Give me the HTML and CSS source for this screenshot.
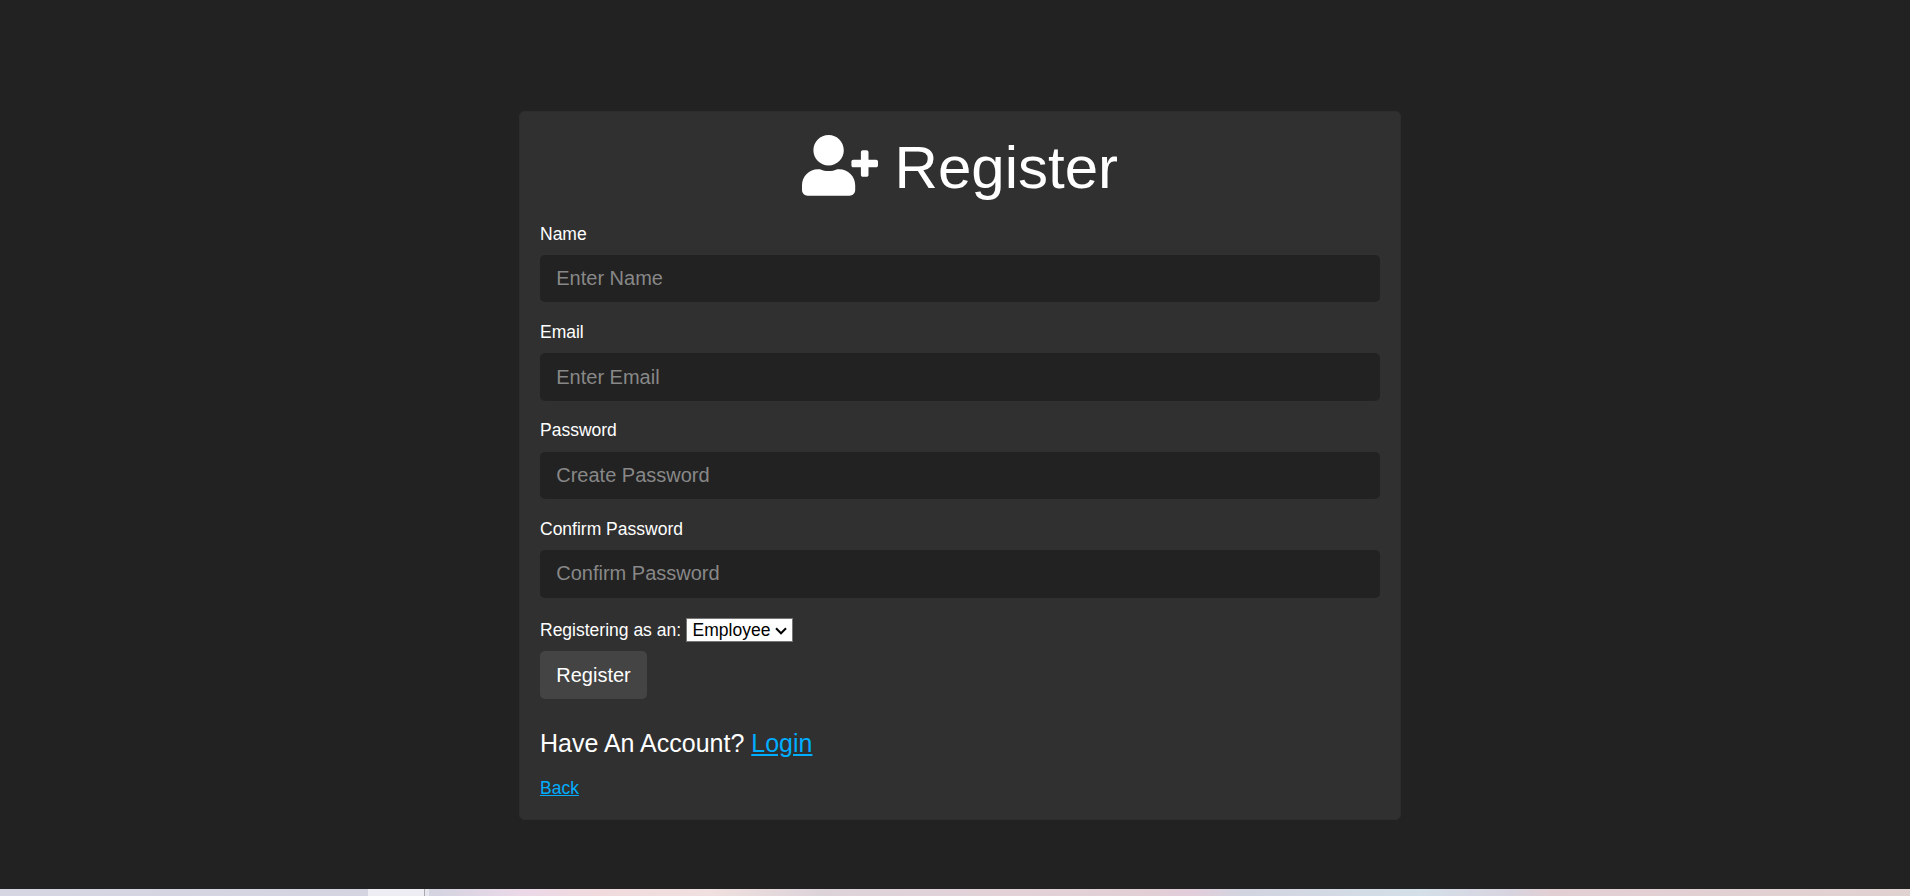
FILE: index.html
```html
<!DOCTYPE html>
<html lang="en">
<head>
<meta charset="utf-8">
<title>Register</title>
<link rel="stylesheet" href="styles.css">
</head>
<body>
<main class="page">
  <section class="card">
    <h1 class="title"><svg class="title-icon" viewBox="0 0 640 512" aria-hidden="true"><path fill="currentColor" d="M624 208h-64v-64c0-8.800-7.200-16-16-16h-32c-8.800 0-16 7.200-16 16v64h-64c-8.800 0-16 7.200-16 16v32c0 8.800 7.200 16 16 16h64v64c0 8.800 7.200 16 16 16h32c8.800 0 16-7.200 16-16v-64h64c8.800 0 16-7.200 16-16v-32c0-8.800-7.200-16-16-16zm-400 48c70.700 0 128-57.300 128-128S294.700 0 224 0 96 57.300 96 128s57.300 128 128 128zm89.600 32h-16.700c-22.200 10.200-46.900 16-72.900 16s-50.600-5.800-72.900-16h-16.700C60.200 288 0 348.200 0 422.400V464c0 26.500 21.500 48 48 48h352c26.500 0 48-21.500 48-48v-41.600c0-74.200-60.200-134.400-134.400-134.400z"/></svg> Register</h1>
    <form class="form">
      <div class="group"><label class="label" for="name">Name</label><input class="input" id="name" type="text" placeholder="Enter Name"></div>
      <div class="group"><label class="label" for="email">Email</label><input class="input" id="email" type="email" placeholder="Enter Email"></div>
      <div class="group"><label class="label" for="password">Password</label><input class="input" id="password" type="password" placeholder="Create Password"></div>
      <div class="group"><label class="label" for="confirm">Confirm Password</label><input class="input" id="confirm" type="password" placeholder="Confirm Password"></div>
      <div class="role">
        <label for="role">Registering as an:</label>
        <span class="select-wrap">
          <select class="select" id="role"><option>Employee</option><option>Employer</option></select>
          <svg class="chevron" viewBox="0 0 12 8" aria-hidden="true"><path d="M1 1.300 6 6.300l5-5" fill="none" stroke="#000" stroke-width="2"/></svg>
        </span>
      </div>
      <button class="button" type="button">Register</button>
    </form>
    <p class="account">Have An Account? <a class="link" href="#">Login</a></p>
    <a class="link back" href="#">Back</a>
  </section>
</main>
<footer class="strip"><span class="strip-tab"></span></footer>
</body>
</html>
```
FILE: styles.css
```css
* { box-sizing: border-box; }

body {
  display: flex;
  flex-direction: column;
  height: 896px;
  margin: 0;
  overflow: hidden;
  background: #222;
  color: #fff;
  font: 17.5px/26.25px "Liberation Sans", Arial, sans-serif;
}

.page {
  flex: 1;
  padding: 111px 0 0 519px;
}

.card {
  width: 882px;
  height: 709px;
  padding: 20px 20px;
  border: 1px solid #2d2d2d;
  border-radius: 5px;
  background: #303030;
}

.title {
  height: 72px;
  margin: 0 0 16.700px;
  font-size: 60px;
  font-weight: 400;
  line-height: 72px;
  text-align: center;
  white-space: nowrap;
}

.title-icon {
  width: 76px;
  height: 60.800px;
  vertical-align: -8px;
}

.group { margin-bottom: 16.650px; }

.label {
  display: block;
  margin-bottom: 8px;
}

.input {
  display: block;
  width: 100%;
  height: 47.500px;
  padding: 0 16.250px;
  border: 0;
  border-radius: 5px;
  background: #222;
  color: #fff;
  font: 20px "Liberation Sans", Arial, sans-serif;
}

.input::placeholder {
  color: #888;
  opacity: 1;
}

.role {
  display: flex;
  align-items: center;
  gap: 5px;
  height: 26px;
  margin-top: 19.300px;
}

.select-wrap {
  display: flex;
  position: relative;
}

.select {
  appearance: none;
  width: 107px;
  height: 24px;
  padding: 0 5.500px;
  border: 1px solid #767676;
  border-radius: 0;
  background-color: #fff;
  color: #000;
  font: 17.5px "Liberation Sans", Arial, sans-serif;
}

.chevron {
  position: absolute;
  top: 9px;
  right: 6px;
  width: 12px;
  height: 8px;
  pointer-events: none;
}

.button {
  display: block;
  width: 107px;
  height: 48px;
  margin-top: 8px;
  padding: 1px 0 0;
  border: 0;
  border-radius: 5px;
  background: #444;
  color: #fff;
  font: 20px "Liberation Sans", Arial, sans-serif;
}

.account {
  margin: 26px 0 13px;
  font-size: 25px;
  line-height: 37.500px;
}

.link {
  color: #00adff;
  text-decoration: underline;
}

.strip {
  height: 7px;
  padding-left: 368px;
  background: linear-gradient(90deg, #d6d5e2 0, #d4d3e0 430px, #ecd9e8 525px, #f0dadd 600px, #f0e0df 710px, #dcd3d9 820px, #e2d2d8 1000px, #e1cfd5 1150px, #e2cddb 1195px, #d2d4df 1240px, #d4dfe8 1420px, #d7d4df 1510px, #e2cfd4 1550px, #e1d2d2 1910px);
}

.strip-tab {
  display: block;
  width: 61px;
  height: 7px;
  background: linear-gradient(90deg, #eeedf3 56px, #aaa9b0 56px, #aaa9b0 57px, #e6e4ed 57px);
}
```
